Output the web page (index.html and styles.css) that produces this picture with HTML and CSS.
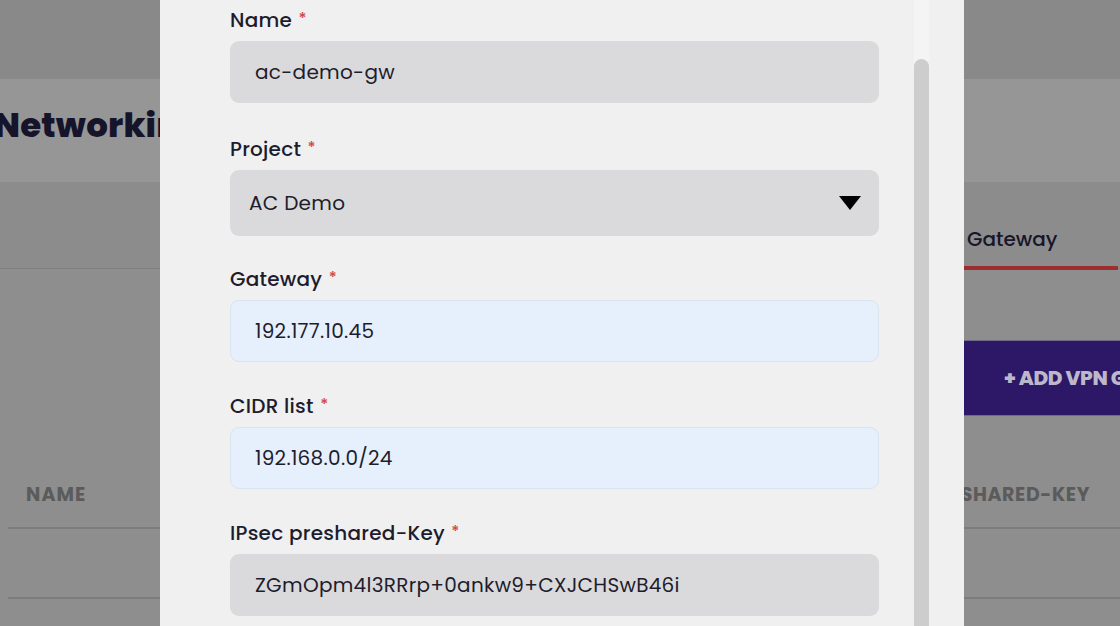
FILE: index.html
```html
<!DOCTYPE html>
<html lang="en">
<head>
<meta charset="utf-8">
<title>Add VPN Gateway</title>
<link rel="stylesheet" href="styles.css">
</head>
<body>
<div class="page">
  <div class="topbar"></div>
  <div class="titleband"><h1 class="title">Networking</h1></div>
  <div class="tabs">
    <div class="tabs-left"></div>
    <div class="tab active">Gateway</div>
  </div>
  <div class="actions">
    <div class="actions-left"></div>
    <button class="add-btn">+ ADD VPN GATEWAY</button>
  </div>
  <div class="table">
    <div class="thead">
      <div class="th">NAME</div>
      <div class="th th-right">PRESHARED-KEY</div>
    </div>
    <div class="trow"></div>
  </div>
</div>

<div class="modal">
  <form class="form">
    <div class="field f-name">
      <label class="label">Name <span class="req">*</span></label>
      <div class="input gray">ac-demo-gw</div>
    </div>
    <div class="field f-project">
      <label class="label">Project <span class="req">*</span></label>
      <div class="input gray select"><span>AC Demo</span>
        <svg class="caret" width="22" height="14" viewBox="0 0 22 14"><path d="M0 0H22L11 14Z" fill="#000"/></svg>
      </div>
    </div>
    <div class="field">
      <label class="label">Gateway <span class="req">*</span></label>
      <div class="input blue">192.177.10.45</div>
    </div>
    <div class="field">
      <label class="label">CIDR list <span class="req">*</span></label>
      <div class="input blue">192.168.0.0/24</div>
    </div>
    <div class="field">
      <label class="label">IPsec preshared-Key <span class="req">*</span></label>
      <div class="input gray">ZGmOpm4l3RRrp+0ankw9+CXJCHSwB46i</div>
    </div>
  </form>
  <div class="scrolltrack"><div class="thumb"></div></div>
</div>
</body>
</html>
```

FILE: styles.css
```css
* { box-sizing: border-box; }
html, body {
  margin: 0;
  padding: 0;
  width: 1120px;
  height: 626px;
  overflow: hidden;
  font-family: "Poppins", "Inter", "Noto Sans", sans-serif;
}
.page {
  width: 1120px;
  height: 626px;
  background: #8e8e8e;
  display: flex;
  flex-direction: column;
}
.topbar {
  height: 79px;
  background: #898989;
}
.titleband {
  height: 103px;
  background: #969696;
  display: flex;
  align-items: flex-start;
  padding-top: 25px;
}
.title {
  margin: 0 0 0 -6px;
  font-size: 34px;
  line-height: 42px;
  font-weight: 800;
  color: #15142a;
  letter-spacing: 0.2px;
}
.tabs {
  height: 87px;
  background: #8c8c8c;
  border-bottom: 1px solid #7e7e7e;
  display: grid;
  grid-template-columns: 964px 154px;
  align-items: end;
}
.tab {
  height: 100%;
  display: flex;
  align-items: flex-end;
  padding: 0 0 12px 3px;
  font-size: 20px;
  font-weight: 500;
  color: #17162a;
  border-bottom: 4px solid #9e2d2f;
  margin-bottom: -2px;
}
.actions {
  margin-top: 71px;
  display: grid;
  grid-template-columns: 964px 1fr;
}
.add-btn {
  height: 76px;
  width: 260px;
  border: 0;
  border-top: 1px solid #6f6a88;
  border-bottom: 1px solid #6f6a88;
  background: #2c1866;
  color: #bcb8c9;
  font-family: inherit;
  font-size: 20px;
  font-weight: 800;
  text-align: left;
  padding: 0 0 0 40px;
  letter-spacing: -0.4px;
  white-space: nowrap;
}
.table {
  margin: 60px 0 0 8px;
}
.thead {
  height: 53px;
  display: flex;
  justify-content: space-between;
  align-items: flex-start;
  padding-top: 6px;
  border-bottom: 2px solid #7c7c7c;
}
.th {
  font-size: 19px;
  line-height: 26px;
  font-weight: 700;
  color: #5b5b5b;
  letter-spacing: 1.1px;
  padding-left: 18px;
}
.th-right {
  padding-right: 30px;
  letter-spacing: 0.6px;
}
.trow {
  height: 70px;
  border-bottom: 2px solid #7c7c7c;
}

.modal {
  position: fixed;
  top: 0;
  left: 160px;
  width: 804px;
  height: 626px;
  background: #f0f0f0;
  display: flex;
}
.form {
  width: 649px;
  margin: 7px 0 0 70px;
  display: flex;
  flex-direction: column;
}
.field {
  display: flex;
  flex-direction: column;
  gap: 10px;
  margin-bottom: 31px;
}
.f-name {
  margin-bottom: 33px;
}
.f-project {
  margin-bottom: 30px;
}
.label {
  height: 24px;
  line-height: 24px;
  font-size: 20px;
  font-weight: 500;
  color: #1d1c2d;
  letter-spacing: 0.25px;
}
.req {
  color: #d24a4a;
  font-size: 16px;
  margin-left: 1px;
  vertical-align: 3px;
}
.input {
  height: 62px;
  border-radius: 9px;
  padding-left: 25px;
  display: flex;
  align-items: center;
  font-size: 20px;
  color: #1e1d2c;
  letter-spacing: 0.3px;
}
.gray {
  background: #dadadc;
}
.blue {
  background: #e6effc;
  border: 1px solid #dbe3ef;
  padding-left: 24px;
}
.select {
  height: 66px;
  padding-left: 19px;
  padding-right: 18px;
  justify-content: space-between;
}
.caret {
  display: block;
}
.scrolltrack {
  width: 15px;
  margin-left: 35px;
  background: #f4f4f4;
  display: flex;
  flex-direction: column;
}
.thumb {
  margin-top: 59px;
  flex: 1;
  background: #cdcdcd;
  border-radius: 8px 8px 0 0;
}
```
